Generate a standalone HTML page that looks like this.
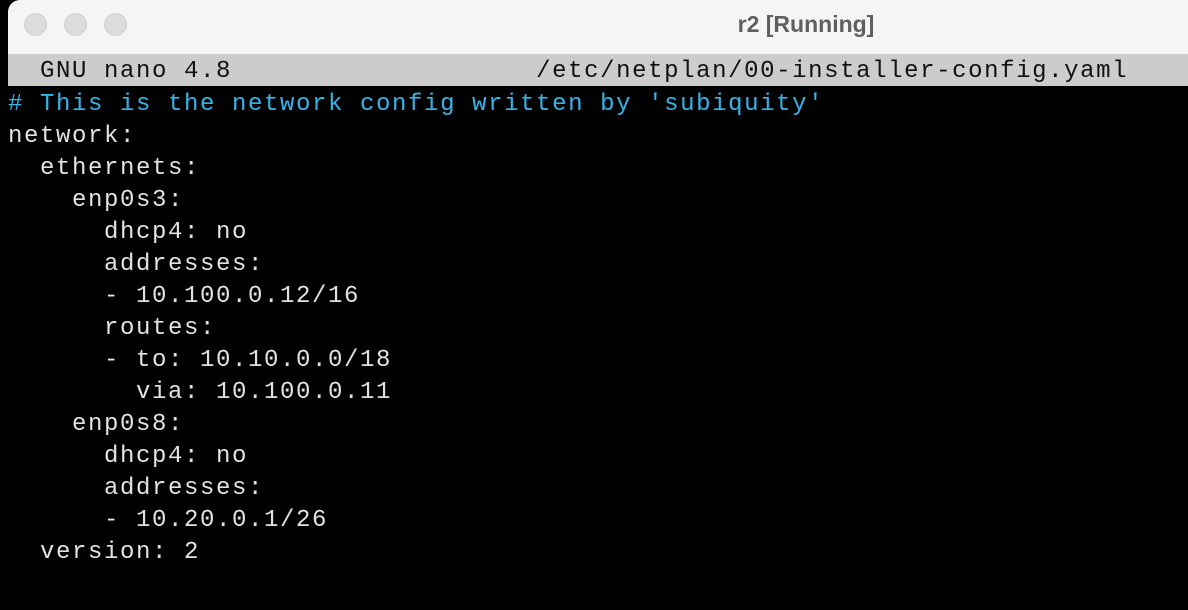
<!DOCTYPE html>
<html><head><style>
html,body{margin:0;padding:0;width:1188px;height:610px;overflow:hidden;background:#000;}
.win{position:absolute;left:0;top:0;width:1188px;height:610px;background:#000;}
.title{position:absolute;left:8px;top:0;width:1180px;height:54px;background:#f5f5f5;border-top-left-radius:12px;}
.dot{position:absolute;top:13px;width:23px;height:23px;border-radius:50%;background:#dcdcdc;border:1px solid #cfcfcf;box-sizing:border-box;}
.ttl{position:absolute;left:0;top:11px;width:1612px;text-align:center;font:bold 23px "Liberation Sans",sans-serif;color:#5f5f5f;}
.hdr{position:absolute;left:8px;top:54px;width:1180px;height:32px;background:#cccccc;}
pre{margin:0;position:absolute;left:8px;font-family:"Liberation Mono",monospace;font-size:24px;letter-spacing:1.6px;line-height:32px;white-space:pre;}
.c{color:#36b4ea}
</style></head><body>
<div class="win">
<div class="title">
<div class="dot" style="left:16px"></div>
<div class="dot" style="left:56px"></div>
<div class="dot" style="left:96px"></div>
</div>
<div class="ttl">r2 [Running]</div>
<div class="hdr"></div>
<pre style="top:56px;color:#111">  GNU nano 4.8                   /etc/netplan/00-installer-config.yaml</pre>
<pre style="top:89px;color:#e2e2e2"><span class="c"># This is the network config written by 'subiquity'</span>
network:
  ethernets:
    enp0s3:
      dhcp4: no
      addresses:
      - 10.100.0.12/16
      routes:
      - to: 10.10.0.0/18
        via: 10.100.0.11
    enp0s8:
      dhcp4: no
      addresses:
      - 10.20.0.1/26
  version: 2</pre>
</div>
</body></html>
